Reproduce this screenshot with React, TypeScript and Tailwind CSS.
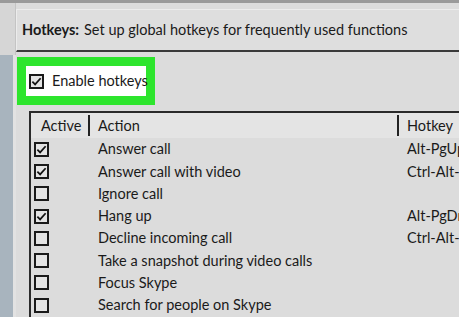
const ROWS = [
  { on: true, action: 'Answer call', key: 'Alt-PgUp' },
  { on: true, action: 'Answer call with video', key: 'Ctrl-Alt-PgUp' },
  { on: false, action: 'Ignore call', key: '' },
  { on: true, action: 'Hang up', key: 'Alt-PgDn' },
  { on: false, action: 'Decline incoming call', key: 'Ctrl-Alt-PgDn' },
  { on: false, action: 'Take a snapshot during video calls', key: '' },
  { on: false, action: 'Focus Skype', key: '' },
  { on: false, action: 'Search for people on Skype', key: '' },
]

function Check({ on }: { on: boolean }) {
  return (
    <span className="flex h-[15px] w-[15px] shrink-0 items-center justify-center border-2 border-[#1a1a1a] bg-[#e4e4e4]">
      {on && (
        <svg viewBox="0 0 12 12" className="h-[11px] w-[11px]">
          <path d="M1.5 6.2 L4.5 9.2 L10.5 2.5" fill="none" stroke="#111" strokeWidth="1.9" />
        </svg>
      )}
    </span>
  )
}

export default function App() {
  return (
    <div
      className="flex h-[317px] w-[459px] flex-col overflow-hidden whitespace-nowrap bg-[#dcdcdc] text-[14.5px] text-[#1a1a1a]"
      style={{ fontFamily: 'Lato, "Noto Sans", sans-serif' }}
    >
      <div className="h-[3px] shrink-0 bg-[#9a9a9a]" />
      <div className="flex flex-1">
        <div className="flex w-[16px] shrink-0 flex-col">
          <div className="h-[52px] border-r border-[#c4c4c4] bg-[#d6d6d6]" />
          <div className="flex-1 border-r-[3px] border-[#e2e2e2] bg-[#a8b4be]" />
        </div>

        <div className="flex min-w-0 flex-1 flex-col">
          <div className="mt-[6px] flex h-[43px] items-center border-l border-t border-b-2 border-l-[#ececec] border-t-[#ececec] border-b-[#3a3a3a] bg-[#dedede] pl-[5px]">
            <span className="font-bold">Hotkeys:</span>
            <span className="ml-[5px]">Set up global hotkeys for frequently used functions</span>
          </div>

          <div className="ml-[1px] mt-[5px] w-[138px] bg-[#2de52d] p-[9px]">
            <div className="flex h-[30px] items-center gap-[8px] bg-white pl-[3px]">
              <Check on />
              <span>Enable hotkeys</span>
            </div>
          </div>

          <div className="ml-[13px] mt-[6px] flex-1 border-l-2 border-t-2 border-[#2a2a2a]">
            <div className="flex h-[25px] items-center bg-[#e4e4e4]">
              <div className="w-[57px] shrink-0 pl-[10px]">Active</div>
              <div className="h-[21px] w-[2px] shrink-0 bg-[#222]" />
              <div className="w-[307px] shrink-0 pl-[8px]">Action</div>
              <div className="h-[21px] w-[2px] shrink-0 bg-[#222]" />
              <div className="shrink-0 pl-[8px]">Hotkey</div>
            </div>
            {ROWS.map((r) => (
              <div key={r.action} className="flex h-[22.3px] items-center">
                <div className="w-[59px] shrink-0 pl-[3px]">
                  <Check on={r.on} />
                </div>
                <div className="w-[309px] shrink-0 pl-[8px]">{r.action}</div>
                <div className="shrink-0 pl-[8px]">{r.key}</div>
              </div>
            ))}
          </div>
        </div>
      </div>
    </div>
  )
}
